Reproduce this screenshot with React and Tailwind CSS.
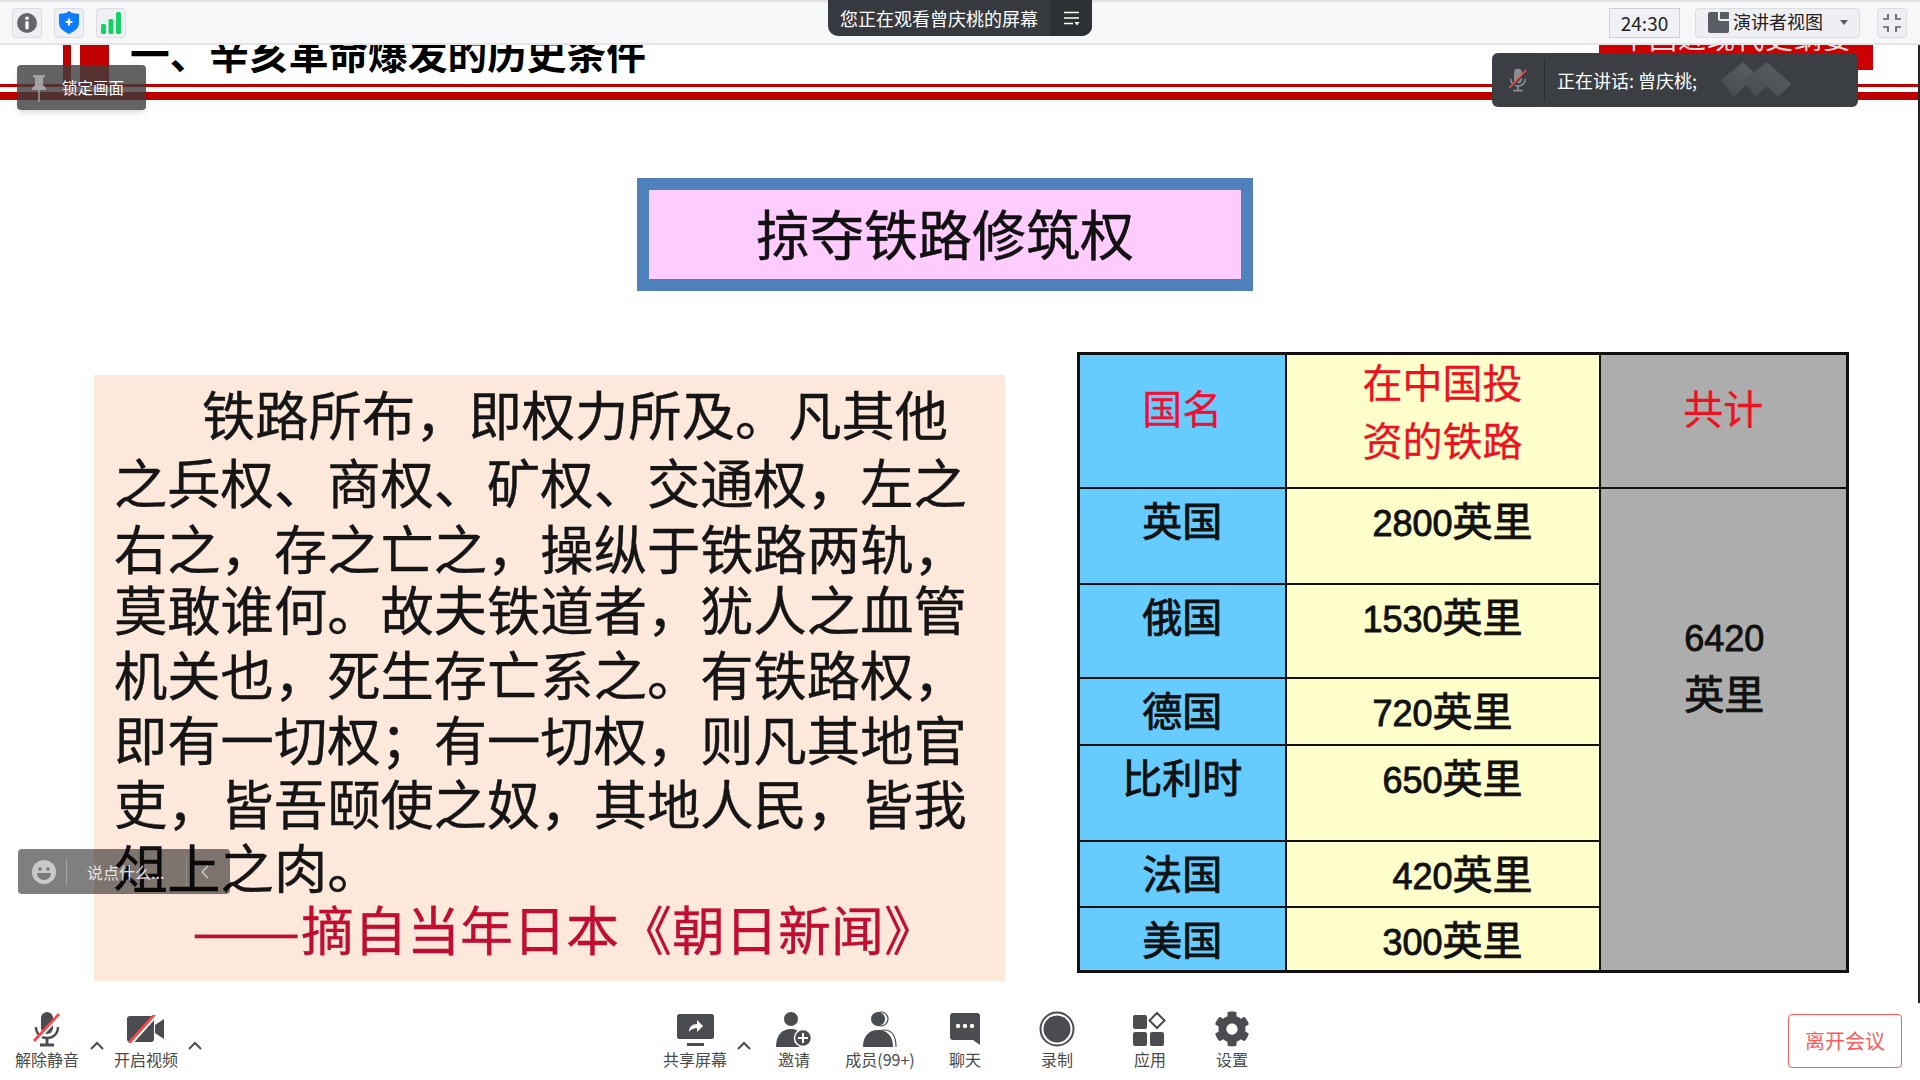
import { FaCog } from "react-icons/fa";

const PASSAGE = [
  { text: "铁路所布，即权力所及。凡其他", cls: "leading-[64px] pl-[88px]" },
  { text: "之兵权、商权、矿权、交通权，左之", cls: "leading-[72px]" },
  { text: "右之，存之亡之，操纵于铁路两轨，", cls: "leading-[60px]" },
  { text: "莫敢谁何。故夫铁道者，犹人之血管", cls: "leading-[62px]" },
  { text: "机关也，死生存亡系之。有铁路权，", cls: "leading-[68px]" },
  { text: "即有一切权；有一切权，则凡其地官", cls: "leading-[62px]" },
  { text: "吏，皆吾颐使之奴，其地人民，皆我", cls: "leading-[66px]" },
  { text: "俎上之肉。", cls: "leading-[62px]" },
];

const ROWS = [
  { name: "英国", num: "2800", h: "h-[96px]", offset: "pl-[20px]" },
  { name: "俄国", num: "1530", h: "h-[94px]", offset: "" },
  { name: "德国", num: "720", h: "h-[67px]", offset: "" },
  { name: "比利时", num: "650", h: "h-[96px]", offset: "pl-[20px]" },
  { name: "法国", num: "420", h: "h-[66px]", offset: "pl-[40px]" },
  { name: "美国", num: "300", h: "h-[65px]", offset: "pl-[20px]" },
];

const Chevron = () => (
  <svg width="14" height="9" viewBox="0 0 14 9" fill="none" stroke="#4a4c50" strokeWidth="2">
    <path d="M1 8l6-6 6 6" />
  </svg>
);

const MicIcon = ({ color = "#4a4c50", slash = "#ff4242", halo = "#fff", w = 30, h = 36 }) => (
  <svg width={w} height={h} viewBox="0 0 30 36" fill="none">
    <rect x="9" y="1" width="12" height="22" rx="6" fill={color} />
    <path d="M4 16c0 7 5 11 11 11s11-4 11-11" stroke={color} strokeWidth="2.4" />
    <path d="M15 27v6M8 34h14" stroke={color} strokeWidth="2.8" />
    <path d="M3 31L28 4" stroke={halo} strokeWidth="3.6" />
    <path d="M2 30L27 3" stroke={slash} strokeWidth="2.6" />
  </svg>
);

const VideoIcon = () => (
  <svg width="38" height="28" viewBox="0 0 38 28">
    <rect x="0" y="1" width="27" height="26" rx="3" fill="#4a4c50" />
    <path d="M28 10l9-6v20l-9-6z" fill="#4a4c50" />
    <path d="M3 29L29 0" stroke="#fff" strokeWidth="4" />
    <path d="M2 28L28 -1" stroke="#ff4242" strokeWidth="2.8" />
  </svg>
);

const ShareIcon = () => (
  <svg width="37" height="37" viewBox="0 0 37 37">
    <rect x="0" y="3" width="37" height="25" rx="2.5" fill="#4a4c50" />
    <rect x="10" y="32" width="17" height="3" fill="#4a4c50" />
    <path d="M12 21c0-5 3-8 8-8V9l6 6-6 6v-4c-3 0-6 1-8 4z" fill="#fff" />
  </svg>
);

const InviteIcon = () => (
  <svg width="36" height="37" viewBox="0 0 36 37">
    <circle cx="15" cy="8" r="7" fill="#4a4c50" />
    <path d="M0 36c0-12 6-18 15-18 5 0 8 2 11 5v13z" fill="#4a4c50" />
    <circle cx="27" cy="27" r="8.5" fill="#4a4c50" stroke="#fff" strokeWidth="1.5" />
    <path d="M27 22v10M22 27h10" stroke="#fff" strokeWidth="2" />
  </svg>
);

const MembersIcon = () => (
  <svg width="34" height="37" viewBox="0 0 34 37">
    <circle cx="18" cy="8" r="7" fill="none" stroke="#4a4c50" strokeWidth="1.2" />
    <path d="M6 36c0-11 7-17 15-17s12 6 12 17" fill="none" stroke="#4a4c50" strokeWidth="1.2" />
    <circle cx="15" cy="8" r="7" fill="#4a4c50" />
    <path d="M0 36c0-11 6-17 15-17s15 6 15 17z" fill="#4a4c50" />
  </svg>
);

const ChatIcon = () => (
  <svg width="30" height="35" viewBox="0 0 30 35">
    <path d="M3 1h24a3 3 0 013 3v29l-7-5H3a3 3 0 01-3-3V4a3 3 0 013-3z" fill="#4a4c50" />
    <circle cx="8" cy="14" r="2.2" fill="#fff" />
    <circle cx="15" cy="14" r="2.2" fill="#fff" />
    <circle cx="22" cy="14" r="2.2" fill="#fff" />
  </svg>
);

const RecordIcon = () => (
  <svg width="36" height="36" viewBox="0 0 36 36">
    <circle cx="18" cy="18" r="16.5" fill="none" stroke="#4a4c50" strokeWidth="2" />
    <circle cx="18" cy="18" r="13.5" fill="#4a4c50" />
  </svg>
);

const AppsIcon = () => (
  <svg width="34" height="36" viewBox="0 0 34 36">
    <rect x="0" y="4" width="14" height="14" rx="2" fill="#4a4c50" />
    <rect x="0" y="21" width="14" height="14" rx="2" fill="#4a4c50" />
    <rect x="17" y="21" width="14" height="14" rx="2" fill="#4a4c50" />
    <path d="M24 2l7.5 7.5L24 17l-7.5-7.5z" fill="none" stroke="#4a4c50" strokeWidth="2" />
  </svg>
);

const ToolItem = ({ label, width, children }) => (
  <div className={`flex flex-col items-center shrink-0 ${width}`}>
    <div className="h-[40px] flex items-center justify-center">{children}</div>
    <span className="text-[16px] leading-[20px] text-[#4a4a4a] whitespace-nowrap">{label}</span>
  </div>
);

const Caret = () => (
  <div className="w-[20px] shrink-0 flex justify-center pt-[32px] self-start">
    <Chevron />
  </div>
);

const TopBar = () => (
  <div className="h-[45px] shrink-0 flex items-center bg-[#f6f7f9] border-t-2 border-b-2 border-t-[#e2e2e4] border-b-[#e4e4e4] pl-[12px] pr-[13px]">
    <div className="flex gap-[12px]">
      <div className="w-[30px] h-[30px] rounded border border-[#dcdde1] bg-[#eeeff2] flex items-center justify-center">
        <svg width="20" height="20" viewBox="0 0 20 20">
          <circle cx="10" cy="10" r="10" fill="#63666b" />
          <circle cx="10" cy="5.2" r="1.8" fill="#fff" />
          <rect x="8.4" y="8.2" width="3.2" height="8" rx="0.6" fill="#fff" />
        </svg>
      </div>
      <div className="w-[30px] h-[30px] rounded border border-[#dcdde1] bg-[#eeeff2] flex items-center justify-center">
        <svg width="20" height="23" viewBox="0 0 20 23">
          <path d="M10 0l3 2 7 1v9c0 5-4 8-10 11C4 20 0 17 0 12V3l7-1z" fill="#0e7cff" />
          <path d="M10 7.5v7M6.5 11h7" stroke="#fff" strokeWidth="2.2" />
        </svg>
      </div>
      <div className="w-[30px] h-[30px] rounded border border-[#dcdde1] bg-[#eeeff2] flex items-center justify-center">
        <svg width="20" height="22" viewBox="0 0 20 22">
          <rect x="0" y="12" width="5" height="10" rx="1.5" fill="#14d264" />
          <rect x="7.5" y="7" width="5" height="15" rx="1.5" fill="#14d264" />
          <rect x="15" y="0" width="5" height="22" rx="1.5" fill="#14d264" />
        </svg>
      </div>
    </div>
    <div className="ml-auto flex items-center">
      <div className="w-[71px] h-[30px] border border-[#cfd0d4] bg-[#f0f1f4] flex items-center justify-center text-[19px] leading-[26px] text-[#222]">
        24:30
      </div>
      <div className="ml-[15px] w-[165px] h-[30px] rounded-sm border border-[#dcdde1] bg-[#eeeff2] flex items-center pl-[12px] text-[18px] leading-[24px] text-[#222]">
        <svg width="21" height="21" viewBox="0 0 21 21" className="shrink-0 mr-[4px]">
          <path d="M2 0h8v7a2 2 0 002 2h9v10a2 2 0 01-2 2H2a2 2 0 01-2-2V2a2 2 0 012-2z" fill="#5a5d63" />
          <rect x="12" y="0" width="9" height="7" rx="1" fill="#5a5d63" />
        </svg>
        <span className="-mt-[3px]">演讲者视图</span>
        <svg width="8" height="5" viewBox="0 0 8 5" className="ml-[17px]">
          <path d="M0 0h8L4 5z" fill="#5a5d63" />
        </svg>
      </div>
      <div className="ml-[17px] w-[30px] h-[30px] rounded border border-[#dcdde1] bg-[#eeeff2] flex items-center justify-center">
        <svg width="20" height="20" viewBox="0 0 20 20" fill="none" stroke="#5a5d63" strokeWidth="1.7">
          <path d="M1 6h5V1M14 1v5h5M1 14h5v5M19 14h-5v5" />
        </svg>
      </div>
    </div>
  </div>
);

const SlideHeader = () => (
  <>
    <div className="h-[39px] flex overflow-hidden">
      <div className="w-[8px] ml-[63px] bg-[#c00000]" />
      <div className="w-[29px] ml-[9px] bg-[#c00000]" />
      <div className="ml-[21px] -mt-[18px] text-[39.7px] leading-[50px] font-bold text-black whitespace-nowrap">
        一、辛亥革命爆发的历史条件
      </div>
      <div className="ml-auto mr-[45px] w-[274px] h-[25px] bg-[#cc0000] overflow-hidden text-center">
        <div className="-mt-[28px] text-[28px] leading-[40px] tracking-[1px] text-[#f6dcdc] whitespace-nowrap">
          中国近现代史纲要
        </div>
      </div>
    </div>
    <div className="h-[3px] bg-[#c00000]" />
    <div className="h-[8px] mt-[5px] bg-[#bf0000]" />
  </>
);

const RailTable = () => (
  <table className="ml-[72px] w-[769px] h-[618px] table-fixed border-collapse border-[3px] border-[#111] font-['Liberation_Sans','Noto_Sans_CJK_SC',sans-serif] text-[40px] leading-[38px] text-[#111] [-webkit-text-stroke:0.9px_#111] self-start">
    <colgroup>
      <col className="w-[207px]" />
      <col className="w-[314px]" />
      <col className="w-[248px]" />
    </colgroup>
    <tbody>
      <tr className="h-[134px]">
        <td className="border-2 border-[#111] bg-[#66ccff] align-top text-center pt-[36px] text-[#ee1133] [-webkit-text-stroke:0.3px_#ee1133]">国名</td>
        <td className="border-2 border-[#111] bg-[#ffffcc] align-top text-center text-[#ee1122] leading-[58px] [-webkit-text-stroke:0.3px_#ee1122]">
          在中国投
          <br />
          资的铁路
        </td>
        <td className="border-2 border-[#111] bg-[#adadad] align-top text-center pt-[36px] text-[#ee1122] [-webkit-text-stroke:0.3px_#ee1122]">共计</td>
      </tr>
      {ROWS.map((row, i) => (
        <tr key={row.name} className={row.h}>
          <td className="border-2 border-[#111] bg-[#66ccff] align-top text-center pt-[14px]">{row.name}</td>
          <td className={`border-2 border-[#111] bg-[#ffffcc] align-top text-center pt-[14px] ${row.offset}`}>
            <span className="text-[36px]">{row.num}</span>英里
          </td>
          {i === 0 && (
            <td rowSpan={6} className="border-2 border-[#111] bg-[#adadad] align-top text-center pt-[120px] pl-[2px] leading-[57px]">
              <span className="text-[36px]">6420</span>
              <br />
              英里
            </td>
          )}
        </tr>
      ))}
    </tbody>
  </table>
);

const Slide = () => (
  <div className="flex-1 min-h-0 bg-white border-r-2 border-r-[#222] overflow-hidden">
    <SlideHeader />
    <div className="mt-[78px] ml-[637px] w-[616px] h-[113px] border-[12px] border-[#4f81bd] bg-[#ffccff] flex items-center justify-center pb-[4px] text-[54px] text-[#111] [-webkit-text-stroke:0.5px_#111]">
      掠夺铁路修筑权
    </div>
    <div className="flex mt-[61px] pl-[94px]">
      <div className="mt-[23px] w-[911px] h-[606px] bg-[#fde9dc] pt-[6px] pl-[20px] text-[53.3px] text-[#151515] [-webkit-text-stroke:0.4px_#151515] whitespace-nowrap self-start">
        {PASSAGE.map((line) => (
          <div key={line.text} className={line.cls}>
            {line.text}
          </div>
        ))}
        <div className="pl-[78px] text-[53px] leading-[62px] text-[#c00d32] [-webkit-text-stroke:0.3px_#c00d32]">
          <span className="inline-block w-[109px] origin-left scale-x-[1.22]">——</span>
          摘自当年日本《朝日新闻》
        </div>
      </div>
      <RailTable />
    </div>
  </div>
);

const BottomBar = () => (
  <div className="h-[77px] shrink-0 bg-white flex pl-[7px] pr-[18px] pt-[6px]">
    <ToolItem label="解除静音" width="w-[80px]">
      <MicIcon />
    </ToolItem>
    <Caret />
    <ToolItem label="开启视频" width="w-[78px]">
      <VideoIcon />
    </ToolItem>
    <Caret />
    <div className="w-[450px] shrink-0" />
    <ToolItem label="共享屏幕" width="w-[80px]">
      <ShareIcon />
    </ToolItem>
    <div className="w-[18px] shrink-0 flex justify-center pt-[32px] self-start">
      <Chevron />
    </div>
    <ToolItem label="邀请" width="w-[82px]">
      <InviteIcon />
    </ToolItem>
    <ToolItem label="成员(99+)" width="w-[90px]">
      <MembersIcon />
    </ToolItem>
    <ToolItem label="聊天" width="w-[80px]">
      <ChatIcon />
    </ToolItem>
    <ToolItem label="录制" width="w-[104px]">
      <RecordIcon />
    </ToolItem>
    <ToolItem label="应用" width="w-[82px]">
      <AppsIcon />
    </ToolItem>
    <ToolItem label="设置" width="w-[82px]">
      <FaCog size={36} color="#4a4c50" />
    </ToolItem>
    <button className="ml-auto mt-[5px] w-[114px] h-[54px] rounded border border-[#ff5a5a] text-[20px] text-[#ff5a5a]">
      离开会议
    </button>
  </div>
);

export default function App() {
  return (
    <div className="relative w-[1920px] h-[1080px] flex flex-col overflow-hidden bg-white font-['Noto_Sans_CJK_SC',sans-serif]">
      <TopBar />
      <Slide />
      <BottomBar />

      {/* floating meeting overlays */}
      <div className="absolute left-[828px] top-0 w-[264px] h-[36px] flex rounded-b-[10px] overflow-hidden bg-[#36393e] text-white">
        <div className="flex-1 flex items-center pl-[12px] text-[18px] whitespace-nowrap">您正在观看曾庆桃的屏幕</div>
        <div className="w-[42px] bg-[#2d3034] flex items-center justify-center">
          <svg width="17" height="15" viewBox="0 0 17 15">
            <path d="M1 1.5h15M1 7h15M1 12.5h9" stroke="#fff" strokeWidth="1.5" />
            <path d="M11.5 11h5l-2.5 3.5z" fill="#fff" />
          </svg>
        </div>
      </div>

      <div className="absolute left-[17px] top-[65px] w-[129px] h-[45px] rounded-sm bg-[#3c3c3c]/80 shadow-md flex items-center text-white text-[15.5px]">
        <svg width="16" height="28" viewBox="0 0 16 28" className="ml-[14px] mr-[15px]">
          <path d="M2 1h12v2l-2 1v7l3 3v2H1v-2l3-3V4L2 3z" fill="#a3a3a3" />
          <rect x="7.3" y="16" width="1.4" height="12" fill="#a3a3a3" />
        </svg>
        锁定画面
      </div>

      <div className="absolute left-[1492px] top-[53px] w-[366px] h-[54px] rounded-md bg-[#3b3e43] flex items-center text-white text-[18px]">
        <div className="w-[53px] h-[42px] border-r border-r-[#2b2d31] flex items-center justify-center">
          <MicIcon color="#8a8d91" slash="#f24b4b" halo="#3b3e43" w={20} h={24} />
        </div>
        <span className="ml-[12px] whitespace-nowrap">正在讲话: 曾庆桃;</span>
        <svg width="70" height="36" viewBox="0 0 70 36" className="ml-[24px]">
          <defs>
            <linearGradient id="blob" x1="0" y1="1" x2="1" y2="0">
              <stop offset="0" stopColor="#45484d" />
              <stop offset="1" stopColor="#5d6064" />
            </linearGradient>
          </defs>
          <path d="M0 18L22 0l13 13-22 22z" fill="url(#blob)" />
          <path d="M22 19L46 0l24 22-13 13-11-11-12 11z" fill="url(#blob)" />
        </svg>
      </div>

      <div className="absolute left-[18px] top-[849px] w-[212px] h-[45px] rounded-sm bg-black/50 flex items-center text-[16px] text-[#e4e4e4]">
        <svg width="24" height="24" viewBox="0 0 24 24" className="ml-[14px]">
          <circle cx="12" cy="12" r="12" fill="#c9c9c9" />
          <circle cx="8" cy="9" r="1.8" fill="#7a7a7a" />
          <circle cx="16" cy="9" r="1.8" fill="#7a7a7a" />
          <path d="M5 13h14c0 4-3 7-7 7s-7-3-7-7z" fill="#7a7a7a" />
        </svg>
        <div className="ml-[10px] h-[28px] border-l border-l-[#a5a5a5]" />
        <span className="ml-[20px] w-[99px] whitespace-nowrap">说点什么...</span>
        <div className="h-[28px] border-l border-l-[#8f8f8f]" />
        <svg width="8" height="14" viewBox="0 0 8 14" fill="none" stroke="#cfcfcf" strokeWidth="1.3" className="ml-[14px]">
          <path d="M7 1L1 7l6 6" />
        </svg>
      </div>
    </div>
  );
}
